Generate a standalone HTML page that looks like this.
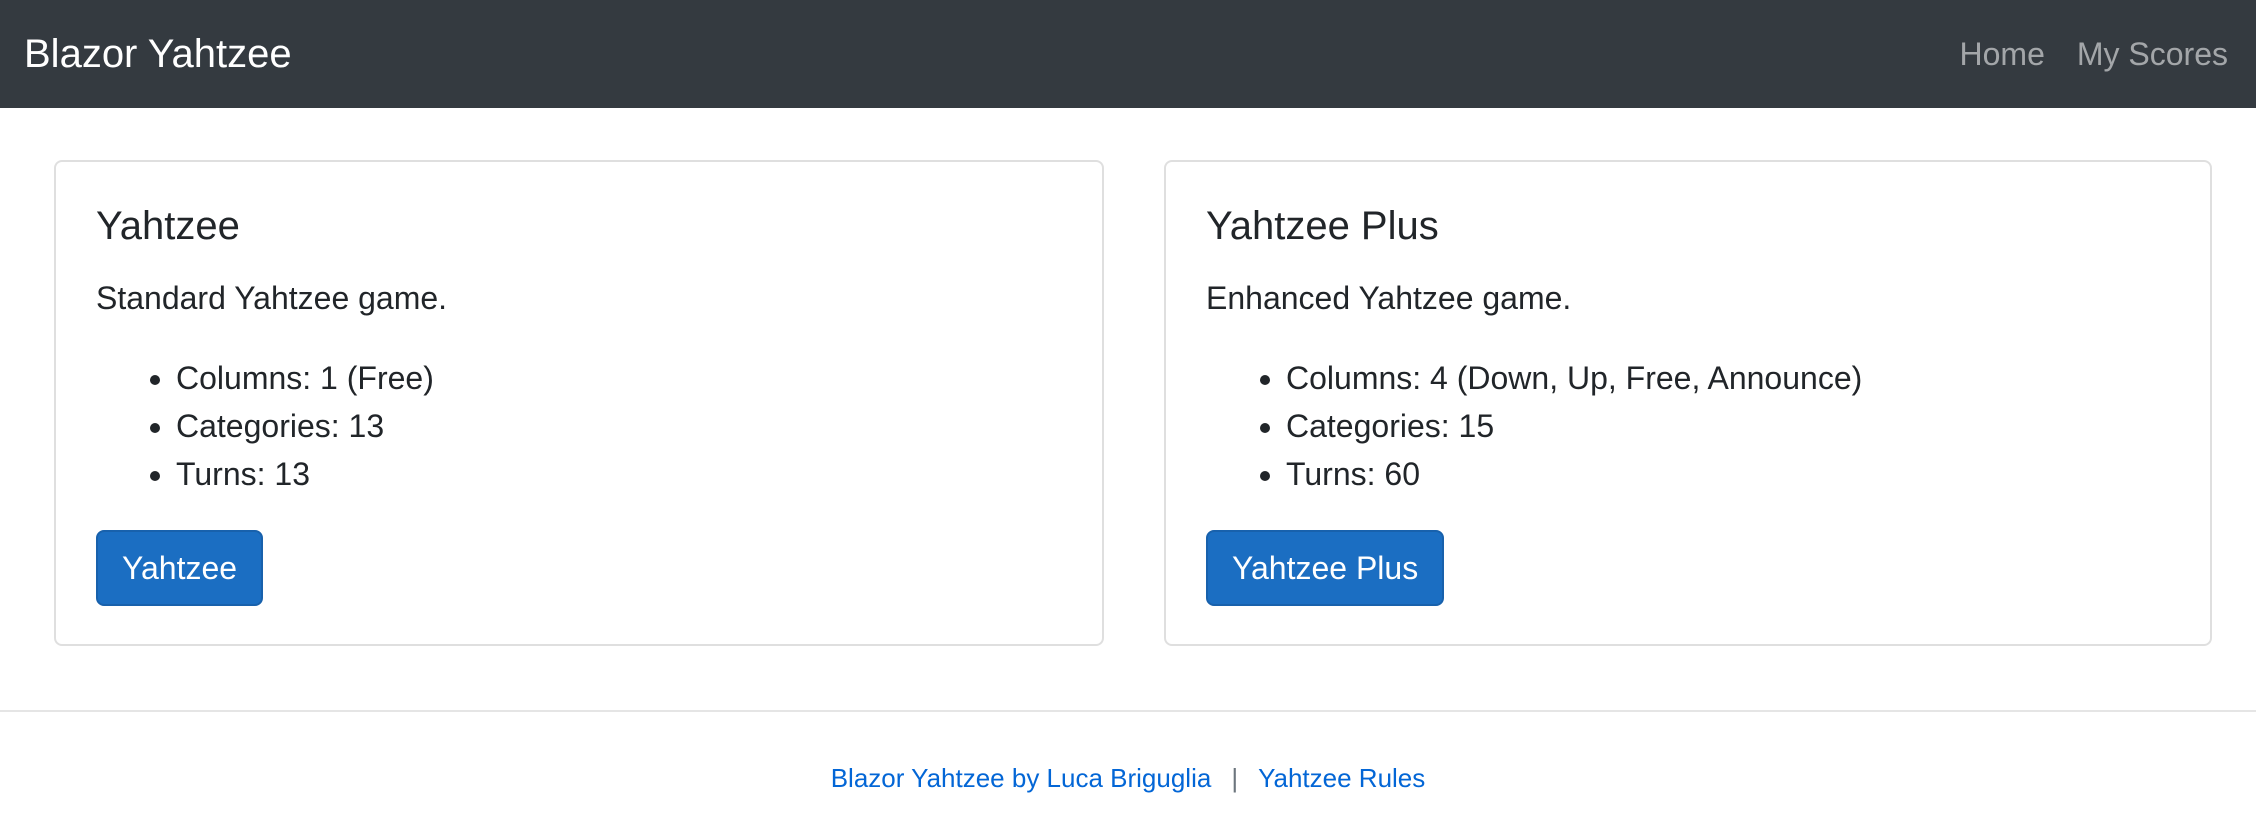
<!DOCTYPE html>
<html><head><meta charset="utf-8"><style>
*{box-sizing:border-box;margin:0;padding:0}
html,body{width:2256px;height:835px;overflow:hidden;background:#fff}
#w{zoom:2;width:1128px;height:417.5px;position:relative;font-family:"Liberation Sans",Arial,sans-serif;color:#212529;font-size:16px;line-height:1.5}
.nav{position:absolute;left:0;top:0;width:1128px;height:54px;background:#343a40}
.brand{position:absolute;left:12px;top:12px;font-size:20px;line-height:30px;color:#fff}
.links{position:absolute;right:6px;top:15px;display:flex}
.links span{padding:0 8px;color:rgba(255,255,255,.55);line-height:24px}
.card{position:absolute;top:80px;height:243px;border:1px solid rgba(0,0,0,.125);border-radius:4px;padding:20px}
.card h5{font-size:20px;font-weight:500;line-height:24px;margin-bottom:12px}
.card p{margin-bottom:16px}
.card ul{padding-left:40px;margin-bottom:16px}
.btn{display:inline-block;background:#1b6ec2;border:1px solid #1861ac;color:#fff;padding:6px 12px;border-radius:4px;line-height:24px}
.hr{position:absolute;left:0;top:355px;width:1128px;border-top:1px solid #e5e5e5}
.foot{position:absolute;left:0;top:379px;width:1128px;text-align:center;line-height:20px;font-size:13px}
.foot a{color:#0366d6;text-decoration:none}
.foot .s{color:#6c757d;margin:0 10px}
</style></head><body><div id="w">
<div class="nav"><div class="brand">Blazor Yahtzee</div><div class="links"><span>Home</span><span>My Scores</span></div></div>
<div class="card" style="left:27px;width:525px"><h5>Yahtzee</h5><p>Standard Yahtzee game.</p><ul><li>Columns: 1 (Free)</li><li>Categories: 13</li><li>Turns: 13</li></ul><span class="btn">Yahtzee</span></div>
<div class="card" style="left:582px;width:524px"><h5>Yahtzee Plus</h5><p>Enhanced Yahtzee game.</p><ul><li>Columns: 4 (Down, Up, Free, Announce)</li><li>Categories: 15</li><li>Turns: 60</li></ul><span class="btn">Yahtzee Plus</span></div>
<div class="hr"></div>
<div class="foot"><a>Blazor Yahtzee by Luca Briguglia</a><span class="s">|</span><a>Yahtzee Rules</a></div>
</div></body></html>
